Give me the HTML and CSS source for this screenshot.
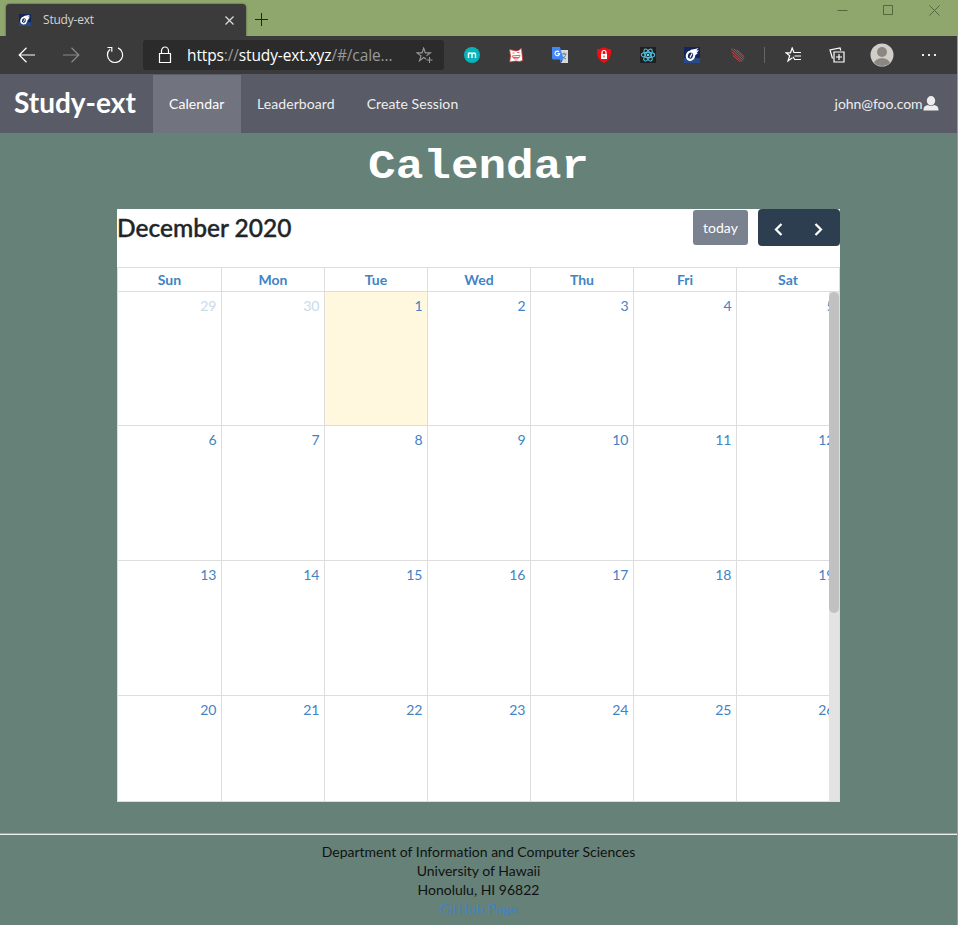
FILE: index.html
```html
<!DOCTYPE html>
<html lang="en">
<head>
<meta charset="utf-8">
<title>Study-ext</title>
<link rel="stylesheet" href="styles.css">
</head>
<body>
<div class="window">
  <header class="titlebar">
    <div class="tab">
      <svg class="favicon" width="12" height="12" viewBox="0 0 16 16"><use href="#comet"/></svg>
      <span class="tab-title">Study-ext</span>
      <svg width="9" height="9" viewBox="0 0 9 9" stroke="#ddd" stroke-width="1.2"><path d="M.5.5l8 8M8.5.5l-8 8"/></svg>
    </div>
    <svg class="new-tab" width="13" height="13" viewBox="0 0 13 13" stroke="#20261a"><path d="M0 6.5h13M6.5 0v13"/></svg>
    <div class="controls">
      <svg width="11" height="11" viewBox="0 0 11 11"><path d="M.5 5.5h10"/></svg>
      <svg width="11" height="11" viewBox="0 0 11 11"><path d="M.5.5h9v9h-9z"/></svg>
      <svg width="11" height="11" viewBox="0 0 11 11"><path d="M.5.5l10 10M10.500.5l-10 10"/></svg>
    </div>
  </header>

  <div class="toolbar">
    <div class="slot"><svg width="18" height="16" viewBox="0 0 18 16" class="line"><path d="M17 8H1M8.500.8L1.200 8l7.300 7.200"/></svg></div>
    <div class="slot dim"><svg width="18" height="16" viewBox="0 0 18 16" class="line"><path d="M1 8h16M9.500.8L16.800 8l-7.300 7.200"/></svg></div>
    <div class="slot"><svg width="18" height="18" viewBox="0 0 18 18" class="line"><path d="M12 1.900A7.600 7.600 0 1 1 4 3.200M1.500 1.500h4.300v4.300"/></svg></div>
    <div class="address">
      <svg class="lock" width="14" height="18" viewBox="0 0 14 18" fill="none" stroke="#fff" stroke-width="1.200"><path d="M1.500 7.500h11v9h-11zM3.500 7.500V4.800a3.500 3.800 0 0 1 7 0v2.700"/></svg>
      <span class="url">https<i>://</i>study-ext.xyz<i>/#/cale...</i></span>
      <svg class="star" width="17" height="17" viewBox="0 0 17 17" fill="none" stroke="#999" stroke-width="1.100"><path d="M10 12l-2.300-1.500L3.500 13.700 5 8.900 1 5.900h5.100L7.700 1l1.600 4.900h5.100l-3.900 3M13.500 10v6M10.500 13h6"/></svg>
    </div>
    <div class="slot"><svg width="16" height="16" viewBox="0 0 16 16"><circle cx="8" cy="8" r="8" fill="#06b5ba"/><path d="M4.500 11V5.500M4.500 7.500c0-2 3.500-2 3.500 0V11M8 7.500c0-2 3.500-2 3.500 0V11" fill="none" stroke="#fff" stroke-width="1.400"/></svg></div>
    <div class="slot"><svg width="16" height="16" viewBox="0 0 16 16"><path d="M1.500 2.500L5 3.200l3 .8 3-.8L13.500 1l.3 3.500.9 9-3 1-4-.5-6 1 .8-6z" fill="#fff" stroke="#d23434" stroke-width=".8"/><path d="M4.500 6h2M9 5.500h2.500M4 9l8-.7c-.5 4.500-6.500 5-8 .7zM5 10.500h6" fill="none" stroke="#e06060" stroke-width="1"/></svg></div>
    <div class="slot"><svg width="16" height="16" viewBox="0 0 16 16"><path d="M5 3h11v13H9z" fill="#d5d8dc"/><path d="M9.500 7h5M12 5.500V7M13.800 7c-.3 2-2 4.300-4 5M10 8.500c1 2 2.500 3 4 3.500" fill="none" stroke="#607d8b"/><path d="M8 12.500h3L9 16z" fill="#2456bd"/><path d="M0 0h8l3.500 12.500H1L0 11.500z" fill="#4285f4"/><path d="M7 4.800a2.300 2.300 0 1 0 .6 1.900H5.500" fill="none" stroke="#fff" stroke-width="1.200"/></svg></div>
    <div class="slot"><svg width="16" height="16" viewBox="0 0 16 16"><path d="M8 0c2 1.500 4 2 7 2 .2 7-1 11-7 14C2 13 .8 9 1 2c3 0 5-.5 7-2z" fill="#f20d12"/><path d="M5 7h6v5H5z" fill="#fff"/><path d="M6 7V5.500a2 2 0 0 1 4 0V7" fill="none" stroke="#fff" stroke-width="1.200"/><path d="M8 8.500v2" stroke="#e11"/></svg></div>
    <div class="slot"><svg width="16" height="16" viewBox="0 0 16 16"><path d="M0 0h16v16H0z" fill="#202020"/><g fill="none" stroke="#50bddb" stroke-width="1.100"><ellipse cx="8" cy="8" rx="6.700" ry="2.600"/><ellipse cx="8" cy="8" rx="6.700" ry="2.600" transform="rotate(60 8 8)"/><ellipse cx="8" cy="8" rx="6.700" ry="2.600" transform="rotate(120 8 8)"/></g><circle cx="8" cy="8" r="1.300" fill="#61dafb"/></svg></div>
    <div class="slot"><svg width="16" height="16" viewBox="0 0 16 16"><g id="comet"><path d="M0 0h16v16H0z" fill="#132657"/><path d="M0 11h16v5H0z" fill="#28498a"/><path d="M6 3.200C8.500 1.800 11 2.500 14.500 1l-2.200 2.500 2.700-.3-2.500 2.700 1.500.2-2.800 2.100" fill="#fff"/><ellipse cx="6.500" cy="8.700" rx="3.600" ry="4.200" transform="rotate(20 6.500 8.700)" fill="#132657" stroke="#fff" stroke-width="2.200"/><path d="M6 10.500l2-4" stroke="#fff" stroke-width="1.200"/></g></svg></div>
    <div class="slot meteor"><svg width="14" height="14" viewBox="0 0 14 14" stroke="#d94b50" stroke-width=".9" stroke-linecap="round"><path d="M.5 1l11.500 11M3 1l9.800 9.500M6 2l7 6.500M1 4l10 9.300M2 7.500l7 6"/></svg></div>
    <div class="divider"></div>
    <div class="slot fav"><svg width="17" height="16" viewBox="0 0 17 16" class="line"><path d="M9 5.500h7M9.500 9H16M10 12.500h6M8 9.800L10 13M10.500 5.500H8.900L7.200 1 5.500 5.800H1l3.700 3L3 14l4.400-3.200"/></svg></div>
    <div class="slot"><svg width="16" height="16" viewBox="0 0 16 16" class="line"><path d="M5 5h10v10H5zM10 7v6M7 10h6M3.500 11.500L1 3l10-2 .8 2.500"/></svg></div>
    <div class="slot profile"><svg width="24" height="24" viewBox="0 0 24 24"><circle cx="12" cy="12" r="11.500" fill="#d1cec9"/><circle cx="12" cy="9" r="5" fill="#8b8682"/><path d="M4 20c1.500-6.500 14.500-6.500 16 0-4 4-12 4-16 0z" fill="#8b8682"/></svg></div>
    <div class="slot"><svg width="16" height="2" viewBox="0 0 16 2" fill="#eee"><path d="M1 0h2v2H1zM7 0h2v2H7zM13 0h2v2h-2z"/></svg></div>
  </div>

  <nav class="menu">
    <a class="brand">Study-ext</a>
    <a class="item active">Calendar</a>
    <a class="item">Leaderboard</a>
    <a class="item">Create Session</a>
    <a class="user">john@foo.com<svg width="16" height="15" viewBox="0 0 16 15" fill="#ededee"><ellipse cx="8" cy="4.800" rx="4.200" ry="4.700"/><path d="M5 9c-3 .8-4.500 1.500-4.500 5.500h15C15.500 10.500 14 9.800 11 9c-1.500 1.300-4.500 1.300-6 0z"/></svg></a>
  </nav>

  <main class="page">
    <h1>Calendar</h1>
    <section class="calendar">
      <div class="cal-head">
        <h2>December 2020</h2>
        <div class="actions">
          <button class="today">today</button>
          <div class="pager">
            <svg width="9" height="13" viewBox="0 0 9 13"><path d="M7.500 1L2 6.500 7.500 12"/></svg>
            <svg width="9" height="13" viewBox="0 0 9 13"><path d="M1.500 1L7 6.500 1.500 12"/></svg>
          </div>
        </div>
      </div>
      <div class="grid">
        <div class="row days"><b>Sun</b><b>Mon</b><b>Tue</b><b>Wed</b><b>Thu</b><b>Fri</b><b>Sat</b></div>
        <div class="body">
          <div class="weeks">
            <div class="row first"><span class="other">29</span><span class="other">30</span><span class="current">1</span><span>2</span><span>3</span><span>4</span><span>5</span></div>
            <div class="row"><span>6</span><span>7</span><span>8</span><span>9</span><span>10</span><span>11</span><span>12</span></div>
            <div class="row"><span>13</span><span>14</span><span>15</span><span>16</span><span>17</span><span>18</span><span>19</span></div>
            <div class="row"><span>20</span><span>21</span><span>22</span><span>23</span><span>24</span><span>25</span><span>26</span></div>
          </div>
          <div class="track"><div class="thumb"></div></div>
        </div>
      </div>
    </section>
    <footer>
      <div>Department of Information and Computer Sciences</div>
      <div>University of Hawaii</div>
      <div>Honolulu, HI 96822</div>
      <div><a>GitHub Page</a></div>
    </footer>
  </main>
</div>
</body>
</html>
```
FILE: styles.css
```css
* { box-sizing: border-box; }
body { margin: 0; background: #8fa76c; font: 14px/19px Lato, sans-serif; font-variant-ligatures: none; }
svg { display: block; flex: none; }
.window { width: 957px; height: 925px; overflow: hidden; display: flex; flex-direction: column; }
.titlebar { height: 36px; flex: none; display: flex; align-items: flex-start; padding-left: 6px; }
.tab { width: 240px; height: 32px; margin-top: 4px; padding: 0 12px 0 13px; display: flex; align-items: center; background: #3b3b3b; border-radius: 4px 4px 0 0; box-shadow: 0 0 2px #3b3b3b; color: #d2d2d2; font: 12px "Open Sans", sans-serif; }
.tab-title { margin-left: 12px; flex: 1; letter-spacing: -.2px; padding-bottom: 1px; }
.new-tab { margin: 13px 0 0 9px; }
.controls { margin: 5px 17px 0 auto; display: flex; gap: 35px; fill: none; stroke: #57663f; }
.toolbar { height: 38px; flex: none; display: flex; align-items: center; background: #3b3b3b; padding-left: 5px; }
.slot { width: 44px; flex: none; display: flex; justify-content: center; }
.line { fill: none; stroke: #fff; stroke-width: 1.2; }
.dim { opacity: .4; }
.address { width: 301px; height: 30px; margin: 0 6px; border-radius: 3px; background: #2b2b2b; display: flex; align-items: center; padding: 0 11px 0 15px; color: #fff; font: 15.5px "Open Sans", sans-serif; }
.url { margin-left: 15px; flex: 1; white-space: nowrap; letter-spacing: -.13px; }
.url i { font-style: normal; color: #999; }
.meteor { width: 48px; }
.divider { width: 1px; height: 16px; margin-left: 2px; background: #666; }
.fav { margin-left: 6px; }
.profile { width: 46px; }
.profile + .slot { padding-left: 3px; }
.menu { height: 59px; flex: none; background: #595c67; color: #eeeeef; display: flex; align-items: center; padding-top: 1px; }
.brand { width: 153px; padding-left: 14px; font-size: 28px; line-height: 32px; font-weight: 700; color: #fff; padding-bottom: 4px; }
.item { height: 58px; line-height: 58px; padding: 0 16px; letter-spacing: .08px; }
.active { width: 88px; background: #71737f; color: #fff; }
.user { margin-left: auto; padding: 0 18.5px 2px 0; display: flex; align-items: center; letter-spacing: -.05px; }
.page { flex: 1; background: #658178; }
h1 { margin: 0; height: 76px; padding-top: 11px; text-align: center; color: #fff; font: 700 40px/48px "Liberation Mono", monospace; transform: scaleX(1.15); }
.calendar { width: 723px; height: 593px; margin: 0 auto; background: #fff; color: #212529; }
.cal-head { height: 58px; display: flex; justify-content: space-between; }
h2 { margin: 0; font-size: 24.5px; line-height: 37px; font-weight: 500; -webkit-text-stroke: .4px #212529; }
.actions { display: flex; gap: 10px; }
.today { width: 55px; height: 35px; margin-top: 1px; padding: 0; border: 0; border-radius: 3px; background: #79828e; color: #fff; font: 14px Lato, sans-serif; }
.pager { width: 82px; height: 37px; padding: 3px 1px 0 0; border-radius: 4px; background: #2c3e50; display: flex; align-items: center; justify-content: center; gap: 31px; fill: none; stroke: #fff; stroke-width: 2.2; }
.grid { height: 535px; border: 1px solid #ddd; color: #4183c4; }
.row { width: 721px; display: grid; grid-template-columns: 104px repeat(5, 103px) 102px; }
.row > * { border-right: 1px solid #ddd; }
.row > :last-child { border-right: 0; }
.days { height: 24px; border-bottom: 1px solid #ddd; text-align: center; line-height: 23px; }
.body { height: 509px; display: flex; }
.weeks { width: 711px; overflow: hidden; }
.weeks .row { height: 135px; border-bottom: 1px solid #ddd; text-align: right; line-height: 19px; }
.weeks .first { height: 134px; }
.row span { padding: 4px 4.5px 4px 4px; }
.row .other { color: #c6daed; }
.row .current { background: #fff8df; }
.track { width: 10px; background: #e3e3e3; }
.thumb { height: 321px; border-radius: 5px; background: #c1c1c1; }
footer { margin-top: 31px; border-top: 1px solid #a6a6a6; box-shadow: inset 0 1px #eee; padding-top: 8px; text-align: center; color: #111; }
footer a { color: #4183c4; }
```
